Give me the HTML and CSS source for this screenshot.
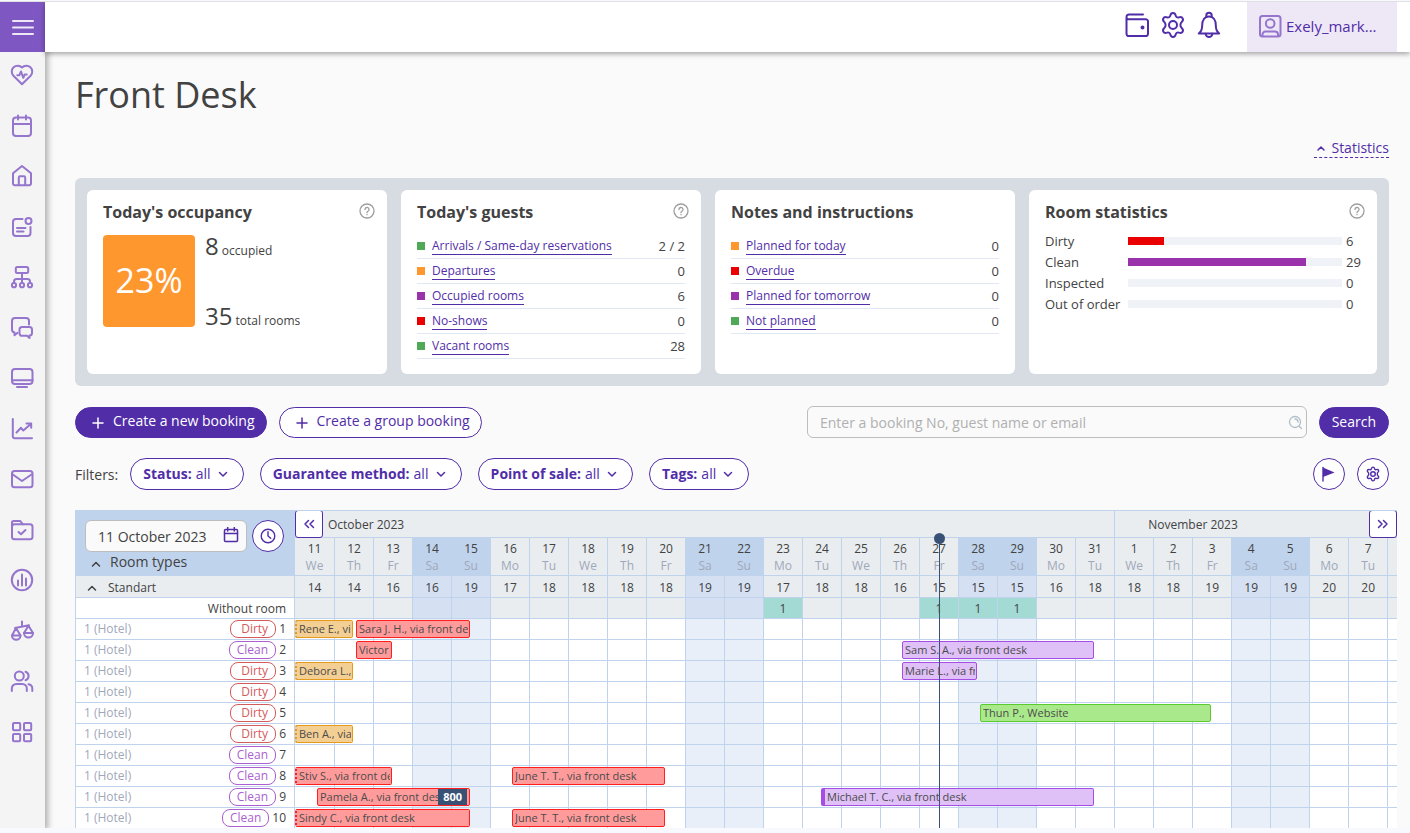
FILE: index.html
```html
<!DOCTYPE html>
<html lang="en">
<head>
    <meta charset="utf-8">
    <title>Front Desk</title>
    <link rel="stylesheet" href="styles.css">
</head>
<body>
    <div class="app">
        <aside class="sidebar">
            <button class="menu-btn" aria-label="Menu">
                <svg class="icon" viewBox="0 0 24 24"><path d="M2 6h20M2 12.500h20M2 19h20"/></svg>
            </button>
            <nav class="side-nav">
                <a href="#" aria-label="Health"><svg class="icon" viewBox="0 0 24 24"><path d="M12 21.200 3.400 12.700a5.900 5.900 0 0 1 8.600-8.200 5.900 5.900 0 0 1 8.600 8.200z"/><path d="M7.300 12.300h2l1.700-3.800 2.300 6.300 1.400-3.300h2"/></svg></a>
                <a href="#" aria-label="Calendar"><svg class="icon" viewBox="0 0 24 24"><rect x="3" y="3.500" width="18" height="18.500" rx="3"/><path d="M3 10h18M8 1.500v4M16 1.500v4"/></svg></a>
                <a href="#" aria-label="Property"><svg class="icon" viewBox="0 0 24 24"><path d="M3 19.500V9.300L12 2l9 7.300v10.200a1.800 1.800 0 0 1-1.800 1.800H4.800A1.800 1.800 0 0 1 3 19.500z"/><path d="M8.800 21v-7.500a1.200 1.200 0 0 1 1.200-1.200h4a1.200 1.200 0 0 1 1.200 1.200V21"/></svg></a>
                <a href="#" aria-label="Notes"><svg class="icon" viewBox="0 0 24 24"><path d="M12.500 4H6a3 3 0 0 0-3 3v11a3 3 0 0 0 3 3h11.500a3 3 0 0 0 3-3v-6"/><circle cx="18.500" cy="6" r="3"/><path d="M7 13h8.500M7 16.500h6.500"/></svg></a>
                <a href="#" aria-label="Channels"><svg class="icon" viewBox="0 0 24 24"><rect x="5.800" y="2" width="12.400" height="6" rx="1.500"/><path d="M12 8v10M4 18v-1.500A2.500 2.500 0 0 1 6.500 14h11a2.500 2.500 0 0 1 2.500 2.500V18"/><circle cx="4" cy="20.200" r="2.100"/><circle cx="12" cy="20.200" r="2.100"/><circle cx="20" cy="20.200" r="2.100"/></svg></a>
                <a href="#" aria-label="Messages"><svg class="icon" viewBox="0 0 24 24"><path d="M19 8.500V5a3 3 0 0 0-3-3H5a3 3 0 0 0-3 3v8.500a3 3 0 0 0 2.500 3v2.800l3-2.500"/><path d="M12 11h7.500a2.500 2.500 0 0 1 2.500 2.500V17a2.500 2.500 0 0 1-2.500 2.500V22L17 19.800h-5A2.500 2.500 0 0 1 9.500 17v-3.500A2.500 2.500 0 0 1 12 11z"/></svg></a>
                <a href="#" aria-label="Website"><svg class="icon" viewBox="0 0 24 24"><rect x="2" y="3" width="20.500" height="15" rx="3"/><path d="M2 14.200h20.500M7 21h10"/></svg></a>
                <a href="#" aria-label="Reports"><svg class="icon" viewBox="0 0 24 24"><path d="M2.800 2v17.500a1.800 1.800 0 0 0 1.800 1.800H22"/><path d="M6.500 15.500 11 10.800l2.300 2.700L20.800 7M16.500 6.500h4.700v4.300"/></svg></a>
                <a href="#" aria-label="Mail"><svg class="icon" viewBox="0 0 24 24"><rect x="2" y="4" width="20.500" height="16.300" rx="2.500"/><path d="M2.800 7.500 12 14l9.500-6.500"/></svg></a>
                <a href="#" aria-label="Tasks"><svg class="icon" viewBox="0 0 24 24"><rect x="2" y="6.300" width="20.500" height="15" rx="2.500"/><path d="M2 9V4.800A1.800 1.800 0 0 1 3.800 3h6.500l2.500 3.300M8.500 14l2.500 2.300 4.500-4.300"/></svg></a>
                <a href="#" aria-label="Analytics"><svg class="icon" viewBox="0 0 24 24"><circle cx="12" cy="12" r="10.200"/><path d="M8 12.500v5M12 6.500v11M16 10.500v7"/></svg></a>
                <a href="#" aria-label="Rates"><svg class="icon" viewBox="0 0 24 24"><path d="M12 2.500v5M5 9l14-2.800M6 9l-4 7.500h8.500zM18.500 6.800 14 14h9z"/><path d="M2 16.500a4.200 4.200 0 0 0 8.500 0M14 14a4.300 4.300 0 0 0 9 0"/></svg></a>
                <a href="#" aria-label="Guests"><svg class="icon" viewBox="0 0 24 24"><circle cx="9.300" cy="7" r="4.500"/><path d="M1.800 22v-2.500a4.500 4.500 0 0 1 4.500-4.500h6a4.500 4.500 0 0 1 4.500 4.500V22M15.500 2.800a4.400 4.400 0 0 1 0 8.400M18.500 15.300a4.500 4.500 0 0 1 3.800 4.400V22"/></svg></a>
                <a href="#" aria-label="Apps"><svg class="icon" viewBox="0 0 24 24"><rect x="3" y="3" width="7.200" height="7.200" rx="1"/><rect x="14" y="3" width="7.200" height="7.200" rx="1"/><rect x="3" y="14" width="7.200" height="7.200" rx="1"/><rect x="14" y="14" width="7.200" height="7.200" rx="1"/></svg></a>
            </nav>
        </aside>

        <header class="topbar">
            <div class="topbar-icons">
                <button aria-label="Wallet"><svg class="icon" viewBox="0 0 28 28"><path d="M3.500 6.500v16.300a2.300 2.300 0 0 0 2.300 2.300h16.900a2.300 2.300 0 0 0 2.300-2.300V10.500a2.300 2.300 0 0 0-2.300-2.300H5.500a2 2 0 0 1-2-2A2.500 2.500 0 0 1 6 3.500h14"/><circle cx="19.500" cy="16.500" r="1" fill="currentColor"/></svg></button>
                <button aria-label="Settings"><svg class="icon" viewBox="0 0 28 28"><use href="#gear"/></svg></button>
                <button aria-label="Notifications"><svg class="icon" viewBox="0 0 28 28"><path d="M3.800 22.500c2.700-2 3.400-4.200 3.400-8.200 0-5 2.300-8.800 6.800-8.800s6.800 3.800 6.800 8.800c0 4 .7 6.200 3.400 8.200z"/><path d="M11.300 5.800V4.500a2.700 2.700 0 0 1 5.400 0v1.300M10.700 22.800a3.300 3.300 0 0 0 6.600 0"/></svg></button>
            </div>
            <a href="#" class="account">
                <svg class="icon" viewBox="0 0 24 24"><rect x="2" y="2" width="20.500" height="20.500" rx="2.500"/><circle cx="12.200" cy="9.500" r="4.300"/><path d="M4.500 22v-1.500a3 3 0 0 1 3-3h9.500a3 3 0 0 1 3 3V22"/></svg>
                <span>Exely_mark...</span>
            </a>
        </header>

        <main class="content">
            <h1>Front Desk</h1>
            <div class="stats-toggle">
                <a href="#"><svg class="chevron" viewBox="0 0 10 10"><path d="M2 7l3-3 3 3"/></svg>Statistics</a>
            </div>

            <section class="stats">
                <div class="card">
                    <div class="card-head">
                        <h2>Today's occupancy</h2>
                        <button class="help" aria-label="Help"><svg viewBox="0 0 16 16"><use href="#question"/></svg></button>
                    </div>
                    <div class="occupancy">
                        <div class="percent">23%</div>
                        <div class="occupancy-text">
                            <div><b>8</b> occupied</div>
                            <div><b>35</b> total rooms</div>
                        </div>
                    </div>
                </div>

                <div class="card">
                    <div class="card-head">
                        <h2>Today's guests</h2>
                        <button class="help" aria-label="Help"><svg viewBox="0 0 16 16"><use href="#question"/></svg></button>
                    </div>
                    <ul class="list">
                        <li class="green"><a href="#">Arrivals / Same-day reservations</a><span>2 / 2</span></li>
                        <li class="orange"><a href="#">Departures</a><span>0</span></li>
                        <li class="purple"><a href="#">Occupied rooms</a><span>6</span></li>
                        <li class="red"><a href="#">No-shows</a><span>0</span></li>
                        <li class="green"><a href="#">Vacant rooms</a><span>28</span></li>
                    </ul>
                </div>

                <div class="card">
                    <div class="card-head">
                        <h2>Notes and instructions</h2>
                    </div>
                    <ul class="list">
                        <li class="orange"><a href="#">Planned for today</a><span>0</span></li>
                        <li class="red"><a href="#">Overdue</a><span>0</span></li>
                        <li class="purple"><a href="#">Planned for tomorrow</a><span>0</span></li>
                        <li class="green"><a href="#">Not planned</a><span>0</span></li>
                    </ul>
                </div>

                <div class="card">
                    <div class="card-head">
                        <h2>Room statistics</h2>
                        <button class="help" aria-label="Help"><svg viewBox="0 0 16 16"><use href="#question"/></svg></button>
                    </div>
                    <div class="room-stats">
                        <div class="room-stat red"><span>Dirty</span><div class="bar"><div class="fill" style="width: 17%"></div></div><span>6</span></div>
                        <div class="room-stat purple"><span>Clean</span><div class="bar"><div class="fill" style="width: 83%"></div></div><span>29</span></div>
                        <div class="room-stat"><span>Inspected</span><div class="bar"></div><span>0</span></div>
                        <div class="room-stat"><span>Out of order</span><div class="bar"></div><span>0</span></div>
                    </div>
                </div>
            </section>

            <div class="actions">
                <button class="btn primary"><svg class="plus" viewBox="0 0 12 12"><path d="M6 1v10M1 6h10"/></svg>Create a new booking</button>
                <button class="btn"><svg class="plus" viewBox="0 0 12 12"><path d="M6 1v10M1 6h10"/></svg>Create a group booking</button>
                <form class="search">
                    <div class="search-field">
                        <input type="text" aria-label="Search bookings" placeholder="Enter a booking No, guest name or email">
                        <svg viewBox="0 0 16 16"><circle cx="8" cy="8" r="5.500"/><path d="M8 5a3 3 0 0 1 3 3M12.200 12.200l2.300 2.300"/></svg>
                    </div>
                    <button type="button" class="btn primary">Search</button>
                </form>
            </div>

            <div class="filters">
                <span>Filters:</span>
                <label class="filter"><b>Status:</b><select><option>all</option></select><svg class="chevron" viewBox="0 0 10 10"><path d="M1.500 3.500 5 7l3.500-3.500"/></svg></label>
                <label class="filter"><b>Guarantee method:</b><select><option>all</option></select><svg class="chevron" viewBox="0 0 10 10"><path d="M1.500 3.500 5 7l3.500-3.500"/></svg></label>
                <label class="filter"><b>Point of sale:</b><select><option>all</option></select><svg class="chevron" viewBox="0 0 10 10"><path d="M1.500 3.500 5 7l3.500-3.500"/></svg></label>
                <label class="filter"><b>Tags:</b><select><option>all</option></select><svg class="chevron" viewBox="0 0 10 10"><path d="M1.500 3.500 5 7l3.500-3.500"/></svg></label>
                <div class="filter-tools">
                    <button class="round-btn" aria-label="Flag"><svg viewBox="0 0 16 16"><path d="M2 1.500v13.500" /><path d="M2 1.500 13.500 6.500 2 11z" fill="currentColor" stroke="none"/></svg></button>
                    <button class="round-btn" aria-label="Calendar settings"><svg viewBox="0 0 28 28" class="small-gear"><use href="#gear"/></svg></button>
                </div>
            </div>

            <div class="schedule" id="schedule">
                <table>
                    <colgroup id="cols"></colgroup>
                    <thead>
                        <tr class="months">
                            <th rowspan="2" class="corner">
                                <div class="date-row">
                                    <div class="date-field">
                                        <input type="text" aria-label="Start date" value="11 October 2023">
                                        <svg viewBox="0 0 16 16"><rect x="1.500" y="2.500" width="13" height="12" rx="1"/><path d="M1.500 6.500h13M4.700.5v3.500M11.300.5v3.500"/></svg>
                                    </div>
                                    <button class="round-btn" aria-label="Today"><svg viewBox="0 0 16 16"><circle cx="8" cy="8" r="6.800"/><path d="M8 3.800V8l2.700 2.300"/></svg></button>
                                </div>
                                <div class="room-types"><svg class="chevron" viewBox="0 0 10 10"><path d="M1.500 7 5 3.500 8.500 7"/></svg>Room types</div>
                            </th>
                            <th colspan="21">October 2023</th>
                            <th colspan="8">November 2023</th>
                        </tr>
                        <tr class="days" id="days"></tr>
                    </thead>
                    <tbody id="rooms"></tbody>
                </table>
                <button class="nav-btn prev" aria-label="Earlier"><svg viewBox="0 0 12 12"><path d="M5.500 2.500 2 6l3.500 3.500M10.500 2.500 7 6l3.500 3.500"/></svg></button>
                <button class="nav-btn next" aria-label="Later"><svg viewBox="0 0 12 12"><path d="M1.500 2.500 5 6 1.500 9.500M6.500 2.500 10 6l-3.500 3.500"/></svg></button>
                <div class="now" id="now"></div>
            </div>
        </main>
    </div>

    <!-- Shared symbols -->
    <svg class="symbols">
        <symbol id="gear" viewBox="0 0 28 28">
            <path d="M11.300 4.600C11.700 2.600 12.700 2 14 2s2.300.6 2.700 2.600c.3 1.500 1.700 2.300 3.200 1.800 2-.7 3.100-.2 3.700.9.700 1.100.6 2.300-.9 3.700-1.700 1.500-1.700 4.500 0 6 1.500 1.400 1.600 2.600.9 3.700-.6 1.100-1.700 1.600-3.700.9-1.500-.5-2.900.3-3.200 1.800-.4 2-1.400 2.600-2.700 2.600s-2.300-.6-2.700-2.600c-.3-1.500-1.700-2.300-3.200-1.800-2 .7-3.100.2-3.700-.9-.7-1.100-.6-2.300.9-3.700 1.700-1.500 1.700-4.500 0-6-1.500-1.400-1.600-2.600-.9-3.700.6-1.100 1.700-1.600 3.700-.9 1.500.5 2.900-.3 3.200-1.800z"/>
            <circle cx="14" cy="14" r="4"/>
        </symbol>
        <symbol id="question" viewBox="0 0 16 16">
            <circle cx="8" cy="8" r="7"/>
            <path d="M6 6.500a2 2 0 1 1 3 1.700c-.7.400-1 .7-1 1.300M8 11.500v.2"/>
        </symbol>
    </svg>

    <script src="script.js"></script>
</body>
</html>
```
FILE: styles.css
```css
* {
    box-sizing: border-box;
}
body {
    margin: 0;
    padding-top: 1px;
    background: #f8f9fe;
    color: #424242;
    font-family: "Open Sans", "Noto Sans", sans-serif;
    font-size: 13px;
}
button, input, select {
    font-family: inherit;
    color: inherit;
}
button {
    padding: 0;
    border: none;
    background: none;
    cursor: pointer;
}
a {
    color: #512da8;
    text-decoration: none;
}
svg {
    display: block;
    flex-shrink: 0;
    fill: none;
    stroke: currentColor;
    stroke-linecap: round;
    stroke-linejoin: round;
}
.symbols {
    display: none;
}
.app {
    display: grid;
    grid-template-columns: 45px 1fr;
    grid-template-rows: 50px 1fr;
    height: calc(100vh - 6px);
    border-top: 1px solid #e0e0e0;
    background: #fafafa;
    overflow: hidden;
}

/* Sidebar */
.sidebar {
    grid-row: 1 / 3;
    display: flex;
    flex-direction: column;
    min-height: 0;
    z-index: 1;
    background: #f4f4f4;
    box-shadow: 1px 0 6px 2px rgba(0, 0, 0, 0.3);
}
.icon {
    width: 24px;
    height: 24px;
    stroke-width: 2;
}
.menu-btn {
    display: flex;
    align-items: center;
    justify-content: center;
    height: 50px;
    flex-shrink: 0;
    background: #7e57c2;
    color: #ede7f6;
}
.side-nav {
    flex: 1;
    display: flex;
    flex-direction: column;
    justify-content: space-between;
    padding-bottom: 73px;
}
.side-nav a {
    display: flex;
    align-items: center;
    height: 46px;
    padding-left: 10px;
    color: #9575cd;
}

/* Top bar */
.topbar {
    display: flex;
    justify-content: flex-end;
    z-index: 2;
    padding-right: 13px;
    background: #fff;
    box-shadow: 0 2px 5px rgba(0, 0, 0, 0.35);
}
.topbar-icons {
    display: flex;
    align-items: center;
    gap: 8px;
    margin-right: 24px;
    padding-bottom: 4px;
    color: #512da8;
}
.topbar-icons .icon {
    width: 28px;
    height: 28px;
}
.account {
    display: flex;
    align-items: center;
    gap: 4px;
    width: 150px;
    padding: 0 0 2px 11px;
    background: #ede7f6;
    font-size: 15px;
}
.account .icon {
    color: #9575cd;
}

/* Page */
.content {
    min-width: 0;
    min-height: 0;
    padding: 19px 21px 0 30px;
    overflow: hidden;
}
h1 {
    margin: 0;
    font-size: 36px;
    font-weight: 400;
    line-height: 48px;
}
.chevron {
    width: 10px;
    height: 10px;
    stroke-width: 1.5;
}
.stats-toggle {
    display: flex;
    justify-content: flex-end;
    margin: 20px 0;
}
.stats-toggle a {
    display: flex;
    align-items: center;
    gap: 5px;
    padding-left: 2px;
    border-bottom: 1px dashed #512da8;
    font-size: 14px;
    line-height: 18px;
}

/* Statistics cards */
.stats {
    display: grid;
    grid-template-columns: 300fr 300fr 300fr 348fr;
    gap: 14px;
    padding: 12px;
    border-radius: 6px;
    background: #d7dbe2;
}
.card {
    min-height: 184px;
    padding: 12px 16px 14px;
    border-radius: 6px;
    background: #fff;
}
.card-head {
    display: flex;
    justify-content: space-between;
    height: 33px;
}
h2 {
    margin: 0;
    font-size: 16px;
    font-weight: 700;
    line-height: 20px;
}
.help {
    width: 16px;
    height: 16px;
    margin: 1px -4px 0 0;
    color: #9e9e9e;
}
.help svg {
    stroke-width: 1.3;
}
.occupancy {
    display: flex;
    gap: 10px;
}
.percent {
    width: 92px;
    height: 92px;
    border-radius: 4px;
    background: #ff972f;
    color: #fff;
    font-size: 34px;
    line-height: 90px;
    text-align: center;
}
.occupancy-text {
    display: flex;
    flex-direction: column;
    gap: 43px;
    font-size: 12px;
    line-height: 22px;
}
.occupancy-text b {
    font-size: 24px;
    font-weight: 400;
}
.list {
    margin: -1px 0 0;
    padding: 0;
    list-style: none;
}
.list li {
    display: flex;
    align-items: center;
    height: 25px;
    border-bottom: 1px solid #dfe8f3;
}
.list li::before {
    content: "";
    width: 8px;
    height: 8px;
    margin-right: 7px;
    background: var(--mark);
}
.list a {
    border-bottom: 1px solid #512da8;
    font-size: 12px;
    line-height: 16px;
}
.list span {
    margin-left: auto;
}
.green { --mark: #4fa957; }
.orange { --mark: #ff972f; }
.purple { --mark: #9932ab; }
.red { --mark: #ea0000; }
.room-stats {
    margin-top: -5px;
}
.room-stat {
    display: grid;
    grid-template-columns: 79px 1fr 15px;
    gap: 4px;
    align-items: center;
    height: 21px;
    line-height: 16px;
    white-space: nowrap;
}
.bar {
    height: 8px;
    background: #eff3f7;
}
.fill {
    height: 100%;
    background: var(--mark);
}

/* Actions */
.actions {
    display: flex;
    align-items: center;
    gap: 12px;
    margin: 20px 0;
}
.btn {
    display: flex;
    align-items: center;
    gap: 9px;
    height: 31px;
    padding: 0 11px 2px 16px;
    border: 1px solid #512da8;
    border-radius: 16px;
    background: #fff;
    color: #512da8;
    font-size: 14px;
    line-height: 20px;
    white-space: nowrap;
}
.primary {
    background: #512da8;
    color: #fff;
}
.plus {
    width: 12px;
    height: 12px;
    margin-top: 4px;
    stroke-width: 1.5;
}
.search {
    display: flex;
    align-items: center;
    gap: 12px;
    width: 582px;
    margin-left: auto;
}
.search .btn {
    padding: 0 12px;
}
.search-field, .date-field {
    display: flex;
    align-items: center;
    flex: 1;
    min-width: 0;
    height: 32px;
    border: 1px solid #bdbdbd;
    border-radius: 6px;
    background: #fafafa;
}
.search-field {
    padding: 0 3px 0 12px;
    color: #b0bec5;
}
.search-field input, .date-field input {
    flex: 1;
    min-width: 0;
    padding: 0;
    border: none;
    outline: none;
    background: none;
    font-size: 14px;
}
.search-field input::placeholder {
    color: #b0b0b0;
}
.search-field svg {
    width: 16px;
    height: 16px;
    stroke-width: 1.3;
}

/* Filters */
.filters {
    display: flex;
    align-items: center;
    gap: 16px;
    margin-bottom: 20px;
    font-size: 14px;
}
.filters > span {
    margin-right: -4px;
}
.filter {
    display: flex;
    align-items: center;
    height: 32px;
    padding: 0 15px 1px 12px;
    border: 1px solid #512da8;
    border-radius: 16px;
    background: #fff;
    color: #512da8;
}
.filter b {
    font-weight: 700;
}
.filter select {
    margin: 0 7px 0 4px;
    padding: 0;
    border: none;
    background: none;
    appearance: none;
    font-size: 14px;
}
.filter-tools {
    display: flex;
    gap: 12px;
    margin-left: auto;
}
.round-btn {
    display: flex;
    align-items: center;
    justify-content: center;
    flex-shrink: 0;
    width: 32px;
    height: 32px;
    border: 1px solid #512da8;
    border-radius: 50%;
    background: #fff;
    color: #512da8;
}
.round-btn svg {
    width: 16px;
    height: 16px;
    stroke-width: 1.4;
}
.round-btn .small-gear {
    stroke-width: 2.5;
}

/* Booking schedule */
.schedule {
    position: relative;
    margin-right: -8px;
    border-top: 1px solid #bfd3ec;
    border-left: 1px solid #bfd3ec;
    overflow: hidden;
}
.schedule table {
    width: 0;
    border-spacing: 0;
    table-layout: fixed;
}
.col-name { width: 219px; }
.col-first { width: 40px; }
.col-day { width: 39px; }
.schedule th, .schedule td {
    position: relative;
    padding: 0;
    border-right: 1px solid #bfd3ec;
    border-bottom: 1px solid #bfd3ec;
    background: #fff;
    font-size: 12px;
    font-weight: 400;
    text-align: center;
    line-height: 18px;
    white-space: nowrap;
}
.schedule thead th, .schedule .types th, .schedule .types td, .schedule .no-room td {
    background: #e9edf0;
}
.schedule .months th {
    height: 27px;
    padding: 1px 0 0 33px;
    text-align: left;
}
.schedule .months .corner {
    padding: 9px 10px 0 9px;
    background: #bfd3ec;
    vertical-align: top;
}
.date-row {
    display: flex;
    gap: 5px;
}
.date-field {
    padding: 0 7px 0 12px;
}
.date-field svg {
    width: 16px;
    height: 16px;
    margin-bottom: 2px;
    stroke-width: 1.5;
    color: #512da8;
}
.room-types {
    display: flex;
    align-items: center;
    gap: 9px;
    padding-left: 6px;
    font-size: 14px;
    line-height: 20px;
}
.room-types .chevron {
    margin-top: 3px;
}
.schedule .days th {
    height: 38px;
    line-height: 17px;
}
.days span {
    display: block;
    color: #9fa8ba;
}
.schedule .days .weekend { background: #bfd3ec; }
.schedule .types .weekend, .schedule .no-room .weekend { background: #d5e1f3; }
.schedule .room .weekend { background: #e8eff9; }
.schedule .no-room .busy { background: #a3dbd4; }
.schedule .types th, .schedule .types td {
    height: 22px;
    padding-top: 2px;
}
.type-name {
    display: flex;
    align-items: center;
    gap: 11px;
    padding-left: 11px;
}
.schedule .no-room th {
    padding-right: 8px;
    text-align: right;
}
.schedule .no-room th, .schedule .no-room td {
    padding-top: 1px;
}
.no-room th, .no-room td, .room th, .room td {
    height: 21px;
}
.room-name {
    display: flex;
    align-items: center;
    gap: 3px;
    height: 20px;
    padding: 0 8px;
}
.room-name .hotel {
    margin-right: auto;
    color: #9fa8ba;
}
.tag {
    padding: 0 7px 0 10px;
    border: 1px solid;
    border-radius: 8px;
    line-height: 16px;
}
.tag.dirty { color: #d35b5b; }
.tag.clean { padding-left: 7px; color: #ab5fd0; }
.booking {
    position: absolute;
    top: 1px;
    z-index: 1;
    height: 18px;
    padding: 0 1px 0 2px;
    border: 1px solid;
    border-radius: 2px;
    font-size: 11px;
    line-height: 16px;
    text-align: left;
}
.booking span {
    display: block;
    color: #4b4b4b;
    overflow: hidden;
}
.booking.in-house { border-color: #ff1f1f; background: #ff9b9b; }
.booking.leaving { border-color: #e69a1a; background: #f4cf94; }
.booking.unpaid { border-color: #a64de6; background: #dfc0f7; }
.booking.confirmed { border-color: #5acb2c; background: #a9e98b; }
.booking.started { border-left-width: 2px; border-left-style: dotted; }
.booking.marked { border-left-width: 4px; }
.debt {
    position: absolute;
    top: 0;
    right: 2px;
    padding: 0 5px;
    background: #3a5176;
    color: #fff;
}
.nav-btn {
    position: absolute;
    top: -1px;
    z-index: 2;
    display: flex;
    align-items: center;
    justify-content: center;
    width: 28px;
    height: 28px;
    border: 1px solid #512da8;
    border-radius: 3px;
    background: #fff;
    color: #512da8;
}
.nav-btn svg {
    width: 12px;
    height: 12px;
    stroke-width: 1.5;
}
.prev { left: 219px; }
.next { right: 0; }
.now {
    position: absolute;
    top: 27px;
    bottom: 0;
    z-index: 2;
    width: 1px;
    background: #3a5176;
}
.now::before {
    content: "";
    position: absolute;
    top: -5px;
    left: -5px;
    width: 11px;
    height: 11px;
    border-radius: 50%;
    background: #3a5176;
}
```
FILE: script.js
```js
const DAY_WIDTH = 39;
const NAME_WIDTH = 219;
const CHECK_IN = 21;
const CHECK_OUT = 18;
const weekDays = ['Su', 'Mo', 'Tu', 'We', 'Th', 'Fr', 'Sa'];
const free = [14, 14, 16, 16, 19, 17, 18, 18, 18, 18, 19, 19, 17, 18, 18, 16, 15, 15, 15, 16, 18, 18, 18, 19, 19, 19, 20, 20];
const withoutRoom = { 12: 1, 16: 1, 17: 1, 18: 1 };

// from / to are day indexes counted from 11 October, from -1 is an earlier arrival
const rooms = [
    { state: 'Dirty', bookings: [
        { from: -1, to: 1, type: 'leaving', text: 'Rene E., via front desk' },
        { from: 1, to: 4, type: 'in-house', text: 'Sara J. H., via front desk' }] },
    { state: 'Clean', bookings: [
        { from: 1, to: 2, type: 'in-house', text: 'Victor' },
        { from: 15, to: 20, type: 'unpaid', text: 'Sam S. A., via front desk' }] },
    { state: 'Dirty', bookings: [
        { from: -1, to: 1, type: 'leaving', text: 'Debora L., via front desk' },
        { from: 15, to: 17, type: 'unpaid', text: 'Marie L., via front desk' }] },
    { state: 'Dirty', bookings: [] },
    { state: 'Dirty', bookings: [{ from: 17, to: 23, type: 'confirmed', text: 'Thun P., Website' }] },
    { state: 'Dirty', bookings: [{ from: -1, to: 1, type: 'leaving', text: 'Ben A., via front desk' }] },
    { state: 'Clean', bookings: [] },
    { state: 'Clean', bookings: [
        { from: -1, to: 2, type: 'in-house', text: 'Stiv S., via front desk' },
        { from: 5, to: 9, type: 'in-house', text: 'June T. T., via front desk' }] },
    { state: 'Clean', bookings: [
        { from: 0, to: 4, type: 'in-house', text: 'Pamela A., via front desk', debt: 800 },
        { from: 13, to: 20, type: 'unpaid', text: 'Michael T. C., via front desk', marked: true }] },
    { state: 'Clean', bookings: [
        { from: -1, to: 4, type: 'in-house', text: 'Sindy C., via front desk' },
        { from: 5, to: 9, type: 'in-house', text: 'June T. T., via front desk' }] }
];

const days = free.map((count, i) => new Date(2023, 9, 11 + i));

// the first day column is one pixel wider than the others
function dayStart(i) {
    return i <= 0 ? 0 : i * DAY_WIDTH + 1;
}

// one cell per day, plus an empty one that runs off the right edge
function cells(tag, content) {
    return days.map((day, i) => {
        const weekend = day.getDay() === 0 || day.getDay() === 6 ? 'weekend' : '';
        return content(i, weekend, day);
    }).join('') + `<${tag}></${tag}>`;
}

function bookingBar(b) {
    const cell = Math.max(b.from, 0);
    let left = b.from < 0 ? 0 : CHECK_IN + (b.from === 0 ? 1 : 0);
    if (b.marked) left -= 3;
    const width = dayStart(b.to) + CHECK_OUT - dayStart(cell) - left;
    const classes = ['booking', b.type, b.from < 0 ? 'started' : '', b.marked ? 'marked' : ''].join(' ');
    const debt = b.debt ? `<b class="debt">${b.debt}</b>` : '';
    return `<div class="${classes}" style="left: ${left}px; width: ${width}px"><span>${b.text}</span>${debt}</div>`;
}

document.getElementById('cols').innerHTML = '<col class="col-name"><col class="col-first">' +
    '<col class="col-day">'.repeat(days.length);

document.getElementById('days').innerHTML = cells('th', (i, weekend, day) =>
    `<th class="${weekend}">${day.getDate()}<span>${weekDays[day.getDay()]}</span></th>`);

let html = `<tr class="types"><th><div class="type-name">
    <svg class="chevron" viewBox="0 0 10 10"><path d="M1.500 7 5 3.500 8.500 7"/></svg>Standart</div></th>
    ${cells('td', (i, weekend) => `<td class="${weekend}">${free[i]}</td>`)}</tr>`;

html += `<tr class="no-room"><th>Without room</th>
    ${cells('td', (i, weekend) => `<td class="${weekend} ${withoutRoom[i] ? 'busy' : ''}">${withoutRoom[i] || ''}</td>`)}</tr>`;

rooms.forEach((room, n) => {
    html += `<tr class="room"><th><div class="room-name">
        <span class="hotel">1 (Hotel)</span>
        <span class="tag ${room.state.toLowerCase()}">${room.state}</span><span>${n + 1}</span></div></th>
        ${cells('td', (i, weekend) => `<td class="${weekend}">${room.bookings
            .filter(b => Math.max(b.from, 0) === i).map(bookingBar).join('')}</td>`)}</tr>`;
});
document.getElementById('rooms').innerHTML = html;

document.getElementById('now').style.left = NAME_WIDTH + dayStart(16) + 19 + 'px';
```
